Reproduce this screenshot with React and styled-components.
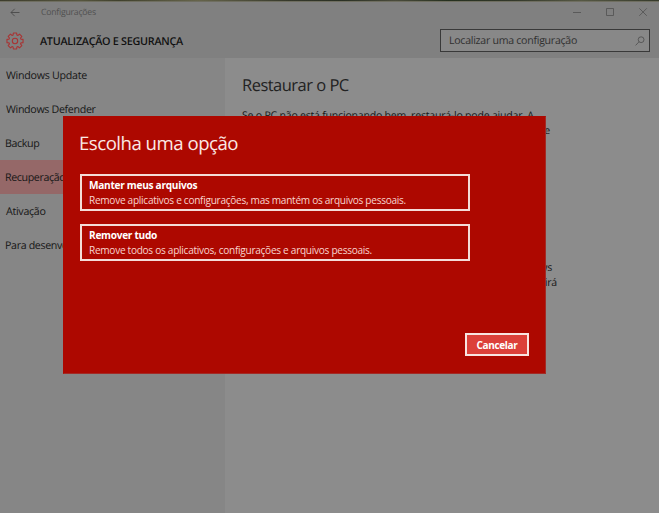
import React from 'react';
import styled, { createGlobalStyle } from 'styled-components';

const GlobalStyle = createGlobalStyle`
  *, *::before, *::after { box-sizing: border-box; }
  body { margin: 0; background: #8c8c8c; }
  button, input { font: inherit; }
`;

const Screen = styled.div`
  position: relative;
  display: flex;
  flex-direction: column;
  width: 659px;
  height: 513px;
  overflow: hidden;
  background: #8c8c8c;
  color: #171717;
  font-family: "Open Sans", "Noto Sans", sans-serif;
  font-size: 10.7px;
  line-height: 16px;
  white-space: nowrap;
  text-rendering: geometricPrecision;
`;

const DesktopEdge = styled.div`
  height: 2px;
  flex: none;
  border-bottom: 1px solid #6f6e60;
  background: linear-gradient(90deg, #3c3c2c, #57563f 12%, #3f402c 18%, #66644b 30%, #35382a 44%, #2a3024 52%, #4a4b3b 60%, #25301f 68%, #33382a 78%, #565844 88%, #353a2b);
`;

const TitleBar = styled.header`
  display: flex;
  align-items: center;
  flex: none;
  height: 21px;
  padding: 0 11px 0 10px;
  background: #808080;
`;

const BackIcon = styled.svg`
  width: 10px;
  height: 9px;
  margin: 0 21px 1px 0;
`;

const WindowTitle = styled.span`
  flex: 1;
  margin-top: -1px;
  color: #505050;
  font-size: 8.7px;
  letter-spacing: -0.24px;
`;

const WindowControls = styled.svg`
  width: 75px;
  height: 10px;
  margin-bottom: 1px;
`;

const HeaderBar = styled.div`
  display: flex;
  align-items: center;
  flex: none;
  height: 35px;
  padding: 0 9px 0 6px;
  background: #808080;
`;

const GearIcon = styled.svg`
  width: 18px;
  height: 18px;
  margin-right: 16px;
`;

const SectionTitle = styled.h1`
  flex: 1;
  margin: 0;
  padding-top: 2px;
  color: #111;
  font-size: 10.8px;
  font-weight: 600;
  letter-spacing: -0.28px;
`;

const SearchBox = styled.div`
  display: flex;
  align-items: center;
  justify-content: space-between;
  width: 210px;
  height: 23px;
  padding: 0 4px 0 8px;
  border: 1px solid #393939;
  background: #888;
  color: #303030;
  font-size: 10.6px;
  letter-spacing: -0.27px;
`;

const SearchIcon = styled.svg`
  width: 10px;
  height: 10px;
`;

const Body = styled.div`
  display: flex;
  flex: 1;
  min-height: 0;
`;

const Sidebar = styled.nav`
  width: 225px;
  flex: none;
  background: #868686;
`;

const NavItem = styled.div`
  display: flex;
  align-items: center;
  height: 34px;
  padding: 2px 0 0 ${(p) => p.$inset || '6px'};
  background: ${(p) => (p.$selected ? '#956868' : 'transparent')};
  letter-spacing: ${(p) => p.$tracking || '-0.34px'};
`;

const Content = styled.main`
  flex: 1;
  padding: 16px 0 0 17px;
`;

const ContentTitle = styled.h2`
  margin: 0 0 13px;
  color: #222;
  font-size: 16.5px;
  font-weight: 400;
  line-height: 22px;
  letter-spacing: -0.52px;
`;

const Paragraph = styled.div`
  width: ${(p) => p.$width};
  margin-bottom: ${(p) => p.$gap || '0'};
  font-size: 10.6px;
  line-height: 15px;
  letter-spacing: -0.24px;
`;

const TextLine = styled.div`
  display: flex;
  justify-content: flex-end;
  width: ${(p) => p.$width};
`;

const Dialog = styled.section`
  position: absolute;
  left: 63px;
  top: 116px;
  display: flex;
  flex-direction: column;
  width: 483px;
  height: 258px;
  padding: 14px 17px 17px;
  border: 1px solid #a22b26;
  border-top-color: #ad0800;
  border-left-color: #ad0800;
  background: #ad0800;
  color: #fff;
`;

const DialogTitle = styled.h2`
  margin: 0 0 17px -2px;
  font-size: 18.6px;
  font-weight: 400;
  line-height: 26px;
  letter-spacing: -0.49px;
  color: #fbe9e5;
`;

const Option = styled.button`
  display: flex;
  flex-direction: column;
  width: 390px;
  height: 37px;
  margin: 0 0 13px -1px;
  padding: 2px 7px 0;
  border: 2px solid #f4dcd8;
  background: transparent;
  color: inherit;
  text-align: left;
  font-size: 10.1px;
  line-height: 14px;
`;

const OptionName = styled.div`
  font-weight: 700;
  letter-spacing: -0.28px;
`;

const OptionDetail = styled.div`
  padding-top: 1px;
  color: #f8d5cf;
  letter-spacing: -0.29px;
`;

const CancelButton = styled.button`
  width: 64px;
  height: 23px;
  margin: auto -1px 0 auto;
  padding: 1px 0 0;
  border: 2px solid #f8e5e1;
  background: #dc4039;
  color: #fff;
  font-size: 10px;
  font-weight: 700;
  line-height: 16px;
  letter-spacing: -0.33px;
`;

const gearOutline = (() => {
  const points = [];
  const step = Math.PI / 4;
  for (let i = 0; i < 8; i += 1) {
    const a = i * step;
    [[-0.31, 6.2], [-0.2, 8.2], [0.2, 8.2], [0.31, 6.2]].forEach(([offset, r]) => {
      points.push(`${(9 + r * Math.sin(a + offset)).toFixed(2)},${(9 - r * Math.cos(a + offset)).toFixed(2)}`);
    });
  }
  return points.join(' ');
})();

const navItems = [
  { label: 'Windows Update', tracking: '-0.28px' },
  { label: 'Windows Defender' },
  { label: 'Backup', tracking: '-0.4px', inset: '5px' },
  { label: 'Recuperação', selected: true, tracking: '-0.4px', inset: '5px' },
  { label: 'Ativação', tracking: '-0.3px' },
  { label: 'Para desenvolvedores', tracking: '-0.36px', inset: '5px' },
];

const options = [
  { name: 'Manter meus arquivos', detail: 'Remove aplicativos e configurações, mas mantém os arquivos pessoais.' },
  { name: 'Remover tudo', detail: 'Remove todos os aplicativos, configurações e arquivos pessoais.' },
];

export default function App() {
  return (
    <Screen>
      <GlobalStyle />
      <DesktopEdge />
      <TitleBar>
        <BackIcon viewBox="0 0 10 9" fill="none" stroke="#4a4a4a" strokeWidth="0.9">
          <path d="M9.5 4.5H1M4.7.8 1 4.5l3.7 3.7" />
        </BackIcon>
        <WindowTitle>Configurações</WindowTitle>
        <WindowControls viewBox="0 0 75 10" fill="none" stroke="#505050" strokeWidth="0.8">
          <path d="M0 5.5h8M33.5 1.5h7v7h-7zM66.3 1.3l7.5 7.5M73.8 1.3l-7.5 7.5" />
        </WindowControls>
      </TitleBar>
      <HeaderBar>
        <GearIcon viewBox="0 0 18 18" fill="none" stroke="#a83434" strokeWidth="1.1" strokeLinejoin="round">
          <polygon points={gearOutline} />
          <circle cx="9" cy="9" r="2.7" />
        </GearIcon>
        <SectionTitle>ATUALIZAÇÃO E SEGURANÇA</SectionTitle>
        <SearchBox>
          Localizar uma configuração
          <SearchIcon viewBox="0 0 10 10" fill="none" stroke="#484848" strokeWidth="0.75">
            <circle cx="6.1" cy="3.7" r="2.9" />
            <path d="M4 5.8.6 9.4" />
          </SearchIcon>
        </SearchBox>
      </HeaderBar>
      <Body>
        <Sidebar>
          {navItems.map((item) => (
            <NavItem key={item.label} $selected={item.selected} $tracking={item.tracking} $inset={item.inset}>
              {item.label}
            </NavItem>
          ))}
        </Sidebar>
        <Content>
          <ContentTitle>Restaurar o PC</ContentTitle>
          <Paragraph $width="316px" $gap="107px">
            <div>Se o PC não está funcionando bem, restaurá-lo pode ajudar. A</div>
            <TextLine $width="308px">restauração permite manter ou remover os arquivos e</TextLine>
            <div>reinstalar o Windows.</div>
          </Paragraph>
          <Paragraph $width="316px">
            <TextLine $width="310px">inicialização do Windows ou restaure o Windows</TextLine>
            <TextLine $width="315px">de uma imagem do sistema. Essa ação irá</TextLine>
            <div>reiniciar o PC.</div>
          </Paragraph>
        </Content>
      </Body>
      <Dialog role="dialog" aria-label="Escolha uma opção">
        <DialogTitle>Escolha uma opção</DialogTitle>
        {options.map((option) => (
          <Option key={option.name}>
            <OptionName>{option.name}</OptionName>
            <OptionDetail>{option.detail}</OptionDetail>
          </Option>
        ))}
        <CancelButton>Cancelar</CancelButton>
      </Dialog>
    </Screen>
  );
}
